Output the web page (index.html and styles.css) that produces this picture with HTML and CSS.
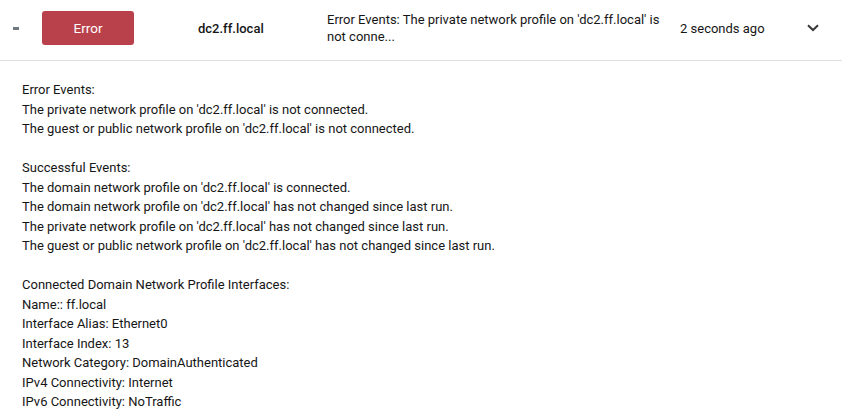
FILE: index.html
```html
<!DOCTYPE html>
<html lang="en">
<head>
<meta charset="utf-8">
<title>Event</title>
<link rel="stylesheet" href="styles.css">
</head>
<body>
<div class="row">
  <div class="toggle"><span class="dash"></span></div>
  <div class="cell-badge"><span class="badge">Error</span></div>
  <div class="host">dc2.ff.local</div>
  <div class="summary">Error Events: The private network profile on 'dc2.ff.local' is not conne...</div>
  <div class="time">2 seconds ago</div>
  <div class="chev">
    <svg width="12" height="8" viewBox="0 0 12 8"><path d="M1 1.2 L6 6 L11 1.2" fill="none" stroke="#393939" stroke-width="2"/></svg>
  </div>
</div>
<div class="details">
  <p>Error Events:<br>The private network profile on 'dc2.ff.local' is not connected.<br>The guest or public network profile on 'dc2.ff.local' is not connected.</p>
  <p>Successful Events:<br>The domain network profile on 'dc2.ff.local' is connected.<br>The domain network profile on 'dc2.ff.local' has not changed since last run.<br>The private network profile on 'dc2.ff.local' has not changed since last run.<br>The guest or public network profile on 'dc2.ff.local' has not changed since last run.</p>
  <p>Connected Domain Network Profile Interfaces:<br>Name:: ff.local<br>Interface Alias: Ethernet0<br>Interface Index: 13<br>Network Category: DomainAuthenticated<br>IPv4 Connectivity: Internet<br>IPv6 Connectivity: NoTraffic</p>
</div>
</body>
</html>
```
FILE: styles.css
```css
html, body {
  margin: 0;
  padding: 0;
  background: #ffffff;
}
body {
  font-family: Roboto, "Liberation Sans", sans-serif;
  font-size: 13px;
  color: #161616;
}
.row {
  display: grid;
  grid-template-columns: 42px 156px 129px 353px 120px 1fr;
  align-items: center;
  height: 56px;
  padding-bottom: 4px;
  border-bottom: 1px solid #e0e0e0;
}
.toggle {
  display: flex;
  padding-left: 13px;
}
.dash {
  display: block;
  width: 6px;
  height: 3px;
  background: #6f7883;
}
.badge {
  display: flex;
  align-items: center;
  justify-content: center;
  width: 92px;
  height: 34px;
  border-radius: 3px;
  background: #b9414b;
  color: #ffffff;
  font-size: 13.5px;
}
.host {
  font-weight: 500;
}
.summary {
  line-height: 17px;
  padding-right: 12px;
}
.chev {
  display: flex;
  padding-left: 7px;
  margin-top: -1px;
}
.details {
  padding: 19px 22px 0;
  line-height: 19.5px;
}
.details p {
  margin: 0 0 19.5px;
}
```
